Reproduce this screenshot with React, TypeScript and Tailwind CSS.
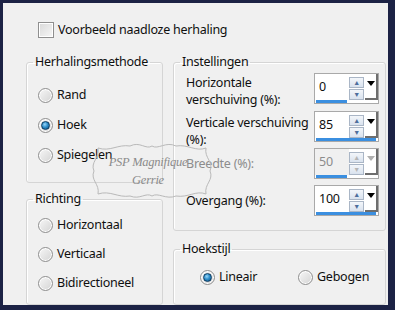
import type { ReactNode } from 'react';

function Radio({ checked }: { checked?: boolean }) {
  return (
    <span className="flex h-[15px] w-[15px] shrink-0 items-center justify-center rounded-full border border-[#8f8f8f] bg-[linear-gradient(135deg,#f7f7f7,#d4d4d4)] shadow-[inset_0_0_0_1px_#ffffff]">
      {checked && (
        <span className="h-[9px] w-[9px] rounded-full border border-[#0d3d63] bg-[radial-gradient(circle_at_40%_35%,#9ad6f7_0%,#2f8fcb_45%,#0c4a7a_100%)]" />
      )}
    </span>
  );
}

function Option({ label, checked, className }: { label: string; checked?: boolean; className?: string }) {
  return (
    <div className={`flex h-[20px] items-center gap-[4px] ${className ?? ''}`}>
      <Radio checked={checked} />
      <span>{label}</span>
    </div>
  );
}

function Group({ title, className, children }: { title: string; className: string; children: ReactNode }) {
  return (
    <fieldset className={`rounded-[3px] border border-[#d5d5d5] shadow-[inset_1px_1px_0_#ffffff] ${className}`}>
      <legend className="ml-[6px] px-[2px] leading-[16px]">{title}</legend>
      {children}
    </fieldset>
  );
}

function SpinBox({ value, bar, disabled }: { value: string; bar: string; disabled?: boolean }) {
  const arrow = disabled ? 'text-[#b5b5b5]' : 'text-[#4d6e9c]';
  return (
    <div className="flex h-[31px] w-[65px] shrink-0 flex-col border border-[#a9a9a9] bg-white">
      <div className="flex h-[26px]">
        <div className={`flex flex-1 items-center pl-[4px] ${disabled ? 'bg-[#f0f0f0] text-[#8c8c8c]' : ''}`}>{value}</div>
        <div className="flex w-[15px] flex-col justify-center gap-[1px] pt-[2px]">
          <div className={`flex h-[11px] items-center justify-center border border-[#aab6c6] bg-[linear-gradient(#f3f6fa,#d9e2ee)] text-[7px] leading-none ${arrow}`}>▲</div>
          <div className={`flex h-[11px] items-center justify-center border border-[#aab6c6] bg-[linear-gradient(#f3f6fa,#d9e2ee)] text-[7px] leading-none ${arrow}`}>▼</div>
        </div>
        <div className="ml-[1px] flex w-[13px] flex-col items-center border-r-2 border-b-2 border-[#6e6e6e] pt-[7px]">
          <span className={`h-0 w-0 border-x-[4px] border-t-[5px] border-x-transparent ${disabled ? 'border-t-[#b0b0b0]' : 'border-t-black'}`} />
        </div>
      </div>
      <div className={`ml-[1px] h-[3px] bg-[#3b8fe0] ${bar}`} />
    </div>
  );
}

export default function App() {
  return (
    <div className="h-[310px] w-[395px] bg-[#1c2245] pb-[5px] pl-[3px] pr-[7px] pt-[3px]">
      <div className="relative h-full w-full bg-[#f0f0f0] font-['Noto_Sans',sans-serif] text-[12.5px] tracking-[-0.25px] text-[#0f0f0f]">
        <label className="flex items-center gap-[4px] pl-[35px] pt-[19px]">
          <span className="h-[16px] w-[16px] border border-[#8f8f8f] bg-[linear-gradient(135deg,#d9d9d9,#f7f7f7)] shadow-[inset_0_0_0_1px_#ffffff]" />
          <span className="leading-[16px]">Voorbeeld naadloze herhaling</span>
        </label>

        <div className="mt-[16px] flex gap-[10px] pl-[23px]">
          <div className="flex w-[137px] flex-col gap-[8px]">
            <Group title="Herhalingsmethode" className="h-[129px]">
              <div className="flex flex-col gap-[10px] pl-[11px] pt-[15px]">
                <Option label="Rand" />
                <Option label="Hoek" checked />
                <Option label="Spiegelen" />
              </div>
            </Group>
            <Group title="Richting" className="h-[114px]">
              <div className="flex flex-col gap-[9px] pl-[11px] pt-[8px]">
                <Option label="Horizontaal" />
                <Option label="Verticaal" />
                <Option label="Bidirectioneel" />
              </div>
            </Group>
          </div>

          <div className="flex w-[213px] flex-col gap-[10px]">
            <Group title="Instellingen" className="h-[177px]">
              <div className="flex flex-col pl-[12px] pt-[3px]">
                <div className="flex h-[31px] items-start">
                  <div className="w-[128px] whitespace-nowrap pt-[1px] leading-[17px]">
                    Horizontale
                    <br />
                    verschuiving (%):
                  </div>
                  <SpinBox value="0" bar="w-[31px]" />
                </div>
                <div className="mt-[7px] flex h-[31px] items-start">
                  <div className="w-[128px] whitespace-nowrap pt-[3px] leading-[17px]">
                    Verticale verschuiving
                    <br />
                    (%):
                  </div>
                  <SpinBox value="85" bar="w-[60px]" />
                </div>
                <div className="mt-[6px] flex h-[31px] items-center">
                  <div className="w-[128px] pt-[2px] text-[#8c8c8c]">Breedte (%):</div>
                  <SpinBox value="50" bar="w-[31px]" disabled />
                </div>
                <div className="mt-[6px] flex h-[31px] items-center">
                  <div className="w-[128px] pt-[2px]">Overgang (%):</div>
                  <SpinBox value="100" bar="w-[60px]" />
                </div>
              </div>
            </Group>
            <Group title="Hoekstijl" className="h-[64px]">
              <div className="flex pl-[26px] pt-[10px]">
                <Option label="Lineair" checked className="w-[98px]" />
                <Option label="Gebogen" />
              </div>
            </Group>
          </div>
        </div>

        <div className="pointer-events-none absolute left-[85px] top-[139px] h-[58px] w-[128px] text-[#8a8a8a]">
          <svg className="absolute inset-0" width="128" height="58" viewBox="0 0 128 58" fill="none" stroke="#b9b9b9" strokeWidth="1">
            <path d="M10 6 C22 10 30 2 42 4 C52 -1 58 8 64 4 C70 8 78 -1 88 4 C100 2 108 10 118 6 C116 16 126 20 122 29 C126 38 116 42 118 52 C108 48 100 56 88 54 C78 58 70 50 64 54 C58 50 52 58 42 54 C30 56 22 48 10 52 C12 42 2 38 6 29 C2 20 12 16 10 6 Z" />
          </svg>
          <div className="relative flex h-full flex-col items-center justify-center pr-[8px] font-['Liberation_Serif',serif] text-[12.5px] italic leading-[18px]">
            <span>PSP Magnifique</span>
            <span>Gerrie</span>
          </div>
        </div>
      </div>
    </div>
  );
}
